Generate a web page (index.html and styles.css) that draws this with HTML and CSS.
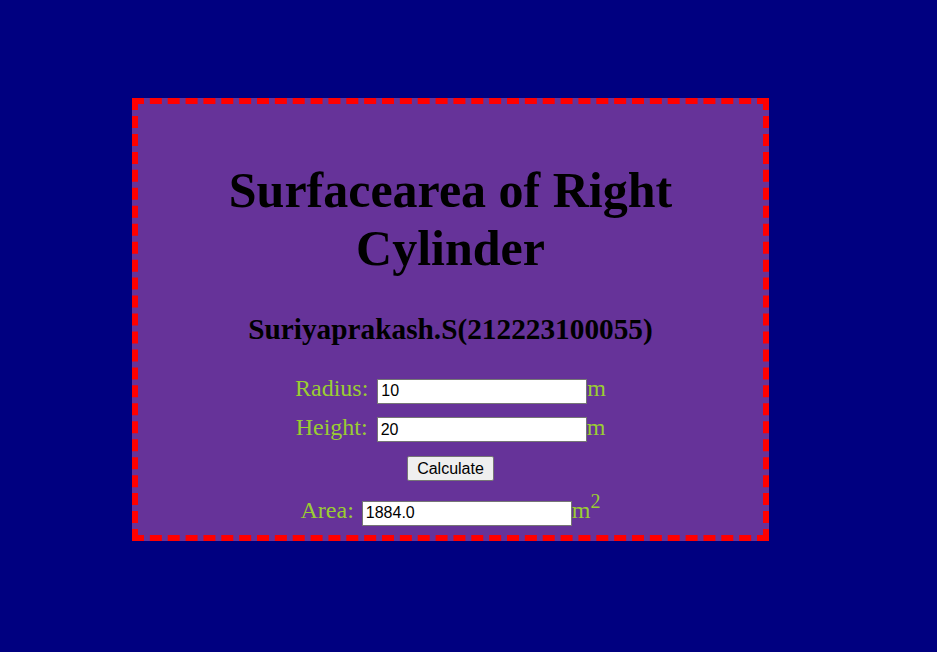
FILE: index.html
```html
<!DOCTYPE html>
<html>
<head>
<meta charset="utf-8">
<title>Surfacearea of Right Cylinder</title>
<link rel="stylesheet" href="styles.css">
</head>
<body>
<div class="box">
  <h1 class="title">Surfacearea of Right Cylinder</h1>
  <h3 class="author">Suriyaprakash.S(212223100055)</h3>
  <form class="form">
    <div class="row">
      <label class="lbl">Radius:</label>
      <input class="field" type="text" value="10">
      <span class="unit">m</span>
    </div>
    <div class="row">
      <label class="lbl">Height:</label>
      <input class="field" type="text" value="20">
      <span class="unit">m</span>
    </div>
    <div class="row btnrow">
      <button class="btn" type="button">Calculate</button>
    </div>
    <div class="row arearow">
      <label class="lbl">Area:</label>
      <input class="field area" type="text" value="1884.0">
      <span class="unit">m<sup class="sq">2</sup></span>
    </div>
  </form>
</div>
</body>
</html>
```
FILE: styles.css
```css
html, body {
  margin: 0;
  padding: 0;
}
body {
  background: #000080;
  font-family: "Liberation Serif", "Times New Roman", serif;
  padding: 98px 0 0 132px;
  height: 652px;
  box-sizing: border-box;
}
.box {
  width: 625px;
  border: 6px dashed #ff0000;
  background: #663399;
  text-align: center;
  padding-top: 25px;
  box-sizing: content-box;
  overflow: hidden;
  height: 406px;
}
.title {
  margin: 33px 0 0;
  font-size: 50px;
  font-weight: bold;
  color: #000;
  line-height: 57.5px;
}
.author {
  margin: 36px 0 0;
  font-size: 29.3px;
  font-weight: bold;
  color: #000;
  line-height: 33px;
}
.form {
  margin: 29px 0 0;
}
.row {
  display: flex;
  justify-content: center;
  align-items: baseline;
  color: #9acd32;
  font-size: 24px;
  line-height: 27.6px;
}
.row + .row {
  margin-top: 10px;
}
.field {
  margin: 0 0 0 9px;
  width: 210px;
  height: 25px;
  box-sizing: border-box;
  border: 1px solid #767676;
  padding: 1px 3px;
  font-family: "Liberation Sans", Arial, sans-serif;
  font-size: 16px;
  color: #000;
  background: #fff;
}
.area {
  margin-left: 8px;
}
.unit {
  white-space: nowrap;
}
.sq {
  font-size: 20px;
  line-height: 0;
  vertical-align: 10px;
}
.btnrow {
  margin-top: 14px !important;
  line-height: normal;
}
.btn {
  width: 87px;
  height: 25px;
  box-sizing: border-box;
  border: 1px solid #767676;
  border-radius: 2px;
  background: #efefef;
  font-family: "Liberation Sans", Arial, sans-serif;
  font-size: 16px;
  color: #000;
  padding: 0;
}
.arearow {
  margin-top: 16px !important;
}
```
